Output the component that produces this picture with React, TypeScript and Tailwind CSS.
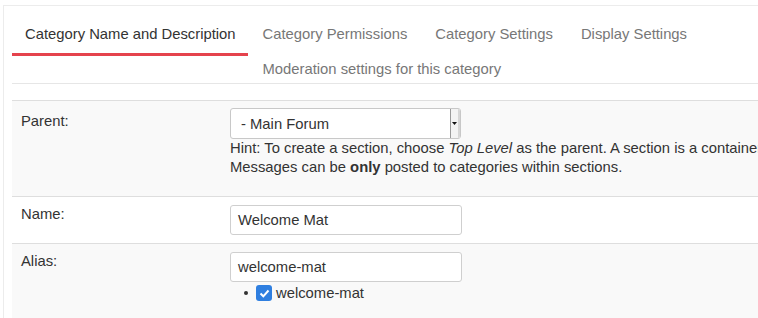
import React from 'react';

const tabs = ['Category Permissions', 'Category Settings', 'Display Settings', 'Moderation settings for this category'];

function SelectBox() {
  return (
    <div className="flex w-[231px] h-[31px] bg-white border border-[#c8c8c8] rounded-[3px] overflow-hidden">
      <div className="flex-1 flex items-center pl-[10px] text-[#333]">- Main Forum</div>
      <div className="w-[10px] flex items-center justify-center border-l border-[#9a9a9a] border-r-2 border-r-[#d6d6d6] bg-[#f3f3f3]">
        <svg width="5" height="3" viewBox="0 0 5 3">
          <path d="M0 0h5L2.5 3z" fill="#111" />
        </svg>
      </div>
    </div>
  );
}

function TextBox(props: { value: string }) {
  return (
    <div className="flex items-center w-[232px] h-[30px] bg-white border border-[#cfcfcf] rounded-[3px] pl-[7px] text-[#333]">
      {props.value}
    </div>
  );
}

export default function App() {
  return (
    <div className="w-[758px] h-[318px] overflow-hidden bg-white text-[14.8px] leading-[20px] text-[#333] font-['Liberation_Sans',Arial,sans-serif]">
      <div className="mt-[5px] ml-[3px] h-[400px] border-t border-l border-[#ececec] pl-[8px] pt-[7px]">
        {/* tab nav */}
        <div className="flex items-start border-b border-[#e6e6e6] w-[900px]">
          <div className="pl-[13px] pr-[12px] pt-[11px] pb-[9px] border-b-[3px] border-[#e5434d] text-[#333] whitespace-nowrap -mb-px">
            Category Name and Description
          </div>
          <div className="flex flex-wrap w-[540px] pl-[1px]">
            {tabs.map((t) => (
              <div key={t} className="px-[14px] pt-[11px] pb-[4px] text-[#777] whitespace-nowrap">
                {t}
              </div>
            ))}
          </div>
        </div>

        {/* form table */}
        <div className="mt-[16px] w-[900px] border-t border-[#dedede]">
          <div className="flex bg-[#f9f9f9] border-b border-[#dedede]">
            <div className="w-[218px] pl-[9px] pt-[10px]">Parent:</div>
            <div className="flex-1 pt-[7px] pb-[8px]">
              <SelectBox />
              <p className="mb-[11px] leading-[19px]">
                Hint: To create a section, choose <i>Top Level</i> as the parent. A section is a container for categories.
                <br />
                Messages can be <b>only</b> posted to categories within sections.
              </p>
            </div>
          </div>
          <div className="flex bg-white border-b border-[#dedede]">
            <div className="w-[218px] pl-[9px] pt-[7px]">Name:</div>
            <div className="flex-1 pt-[8px] pb-[8px]">
              <TextBox value="Welcome Mat" />
            </div>
          </div>
          <div className="flex bg-[#f9f9f9] h-[120px]">
            <div className="w-[218px] pl-[9px] pt-[7px]">Alias:</div>
            <div className="flex-1 pt-[8px]">
              <TextBox value="welcome-mat" />
              <ul className="pl-[14px] mt-[1px]">
                <li className="flex items-center h-[20px]">
                  <span className="w-[4px] h-[4px] rounded-full bg-[#333] mr-[8px]" />
                  <span className="w-[16px] h-[16px] rounded-[3px] bg-[#2f7fe0] flex items-center justify-center mr-[4px]">
                    <svg width="11" height="9" viewBox="0 0 11 9">
                      <path d="M1.5 4.5l2.8 2.8L9.5 1.5" stroke="#fff" strokeWidth="2" fill="none" />
                    </svg>
                  </span>
                  welcome-mat
                </li>
              </ul>
            </div>
          </div>
        </div>
      </div>
    </div>
  );
}
